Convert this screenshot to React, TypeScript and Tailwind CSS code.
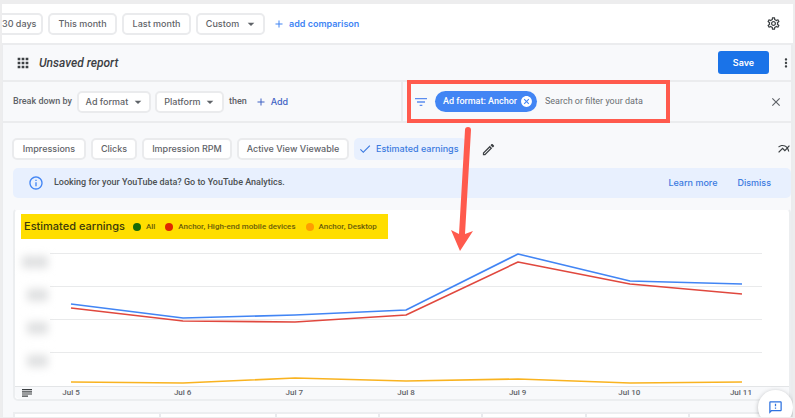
import {
  MdAdd,
  MdApps,
  MdArrowDropDown,
  MdCancel,
  MdCheck,
  MdClose,
  MdFilterList,
  MdMoreVert,
  MdMultilineChart,
  MdOutlineEdit,
  MdOutlineFeedback,
  MdOutlineInfo,
  MdOutlineSettings,
} from "react-icons/md";

const chip =
  "h-[22px] flex items-center justify-center whitespace-nowrap rounded-[5px] border-2 border-[#eaebed] bg-white font-[Inter,sans-serif] text-[9px] text-[#5f6368] font-medium";

const days = ["Jul 5", "Jul 6", "Jul 7", "Jul 8", "Jul 9", "Jul 10", "Jul 11"];

const lines = [
  { color: "#f9b320", points: "21,129 133,130 245,125 356,128 468,126 580,130 692,129" },
  { color: "#e0483e", points: "21,55 133,68 245,69 356,62 468,9 580,31 692,41" },
  { color: "#4285f4", points: "21,51 133,65 245,62 356,57 468,1 580,28 692,31" },
];

const legend = [
  { label: "All", dot: "bg-[#176b06]" },
  { label: "Anchor, High-end mobile devices", dot: "bg-[#df2800]" },
  { label: "Anchor, Desktop", dot: "bg-[#ff9d00]" },
];

function DateBar() {
  return (
    <div className="flex h-[39px] items-center bg-white pr-3">
      <button className="flex h-[22px] w-[41px] items-center whitespace-nowrap rounded-r-[5px] border-y-2 border-r-2 border-[#eaebed] bg-white font-[Inter,sans-serif] text-[9px] font-medium text-[#5f6368]">
        30 days
      </button>
      <button className={`${chip} ml-[5px] w-[69px]`}>This month</button>
      <button className={`${chip} ml-[5px] w-[69px]`}>Last month</button>
      <button className={`${chip} ml-[5px] w-[69px] gap-1`}>
        Custom <MdArrowDropDown className="size-4 -mr-1" />
      </button>
      <button className="ml-2 flex items-center gap-1 font-[Inter,sans-serif] text-[9px] font-semibold text-[#4285f4]">
        <MdAdd className="size-3" /> add comparison
      </button>
      <button aria-label="Settings" className="ml-auto text-[#3c4043]">
        <MdOutlineSettings className="size-[15px]" />
      </button>
    </div>
  );
}

function TitleBar() {
  return (
    <div className="flex h-[37px] items-center border-t-2 border-[#ebecee] pl-3">
      <MdApps className="size-4 text-[#3c4043]" />
      <h1 className="ml-2 text-xs italic font-medium text-[#3c4043]">Unsaved report</h1>
      <button className="ml-auto h-[23px] w-[51px] rounded-[3px] bg-[#1a73e8] font-[Inter,sans-serif] text-[9px] font-semibold text-white">
        Save
      </button>
      <button aria-label="More" className="ml-[10px] w-3 text-[#3c4043]">
        <MdMoreVert className="size-[14px]" />
      </button>
    </div>
  );
}

function FilterBar() {
  return (
    <div className="flex h-[43px] border-y-2 border-[#ebecee]">
      {/* Breakdown */}
      <div className="flex flex-1 items-center border-r-2 border-[#ebecee] pl-[10px] text-[9px] text-[#5f6368]">
        <span className="whitespace-nowrap font-medium">Break down by</span>
        <button className={`${chip} ml-[5px] w-[74px] gap-[2px]`}>
          Ad format <MdArrowDropDown className="size-4 -mr-1" />
        </button>
        <button className={`${chip} ml-1 w-[69px] gap-[2px]`}>
          Platform <MdArrowDropDown className="size-4 -mr-1" />
        </button>
        <span className="ml-[5px] font-medium">then</span>
        <button className="ml-2 flex items-center gap-1 font-[Inter,sans-serif] font-medium text-[#3f62c4]">
          <MdAdd className="size-3" /> Add
        </button>
      </div>

      {/* Filter */}
      <div className="flex w-[388px] items-center pr-2">
        <div className="relative ml-1 flex h-full w-[263px] items-center pl-[6px]">
          <MdFilterList className="size-4 text-[#5b8def]" />
          <span className="ml-[6px] flex h-[21px] items-center gap-[3px] whitespace-nowrap rounded-full bg-[#4285f4] pl-2 pr-1 text-[9px] font-medium text-white">
            Ad format: Anchor
            <button aria-label="Remove filter">
              <MdCancel className="size-[13px]" />
            </button>
          </span>
          <input
            aria-label="Search or filter your data"
            placeholder="Search or filter your data"
            className="ml-2 w-0 flex-1 bg-transparent text-[9px] outline-none placeholder:text-[#6b6f73]"
          />
          <div className="pointer-events-none absolute -inset-y-[2px] inset-x-0 border-4 border-[#ff5a4d]" />
          <svg
            className="pointer-events-none absolute left-[41px] top-[43px] z-10"
            width="30"
            height="128"
            viewBox="0 0 30 128"
          >
            <path
              d="M17 5Q17 2 20 2Q23 2 23 5L17 109L25 106L12 126L3 105L11 109Z"
              fill="#ff5a4d"
            />
          </svg>
        </div>
        <button aria-label="Close" className="ml-auto text-[#5f6368]">
          <MdClose className="size-[14px]" />
        </button>
      </div>
    </div>
  );
}

function Metrics() {
  return (
    <div className="flex items-center gap-[5px] pl-[9px] pt-[15px]">
      <button className={`${chip} w-[74px]`}>Impressions</button>
      <button className={`${chip} w-[46px]`}>Clicks</button>
      <button className={`${chip} w-[90px]`}>Impression RPM</button>
      <button className={`${chip} w-[112px]`}>Active View Viewable</button>
      <button className="flex h-[22px] w-[112px] items-center gap-1 whitespace-nowrap rounded-[5px] bg-[#e8f0fe] pl-1 font-[Inter,sans-serif] text-[9px] font-medium text-[#3b7ae0]">
        <MdCheck className="size-[14px]" /> Estimated earnings
      </button>
      <button aria-label="Edit metrics" className="ml-[10px] text-[#3c4043]">
        <MdOutlineEdit className="size-[15px]" />
      </button>
      <button aria-label="Chart type" className="ml-auto text-[#3c4043]">
        <MdMultilineChart className="size-[14px]" />
      </button>
    </div>
  );
}

function Banner() {
  return (
    <div className="ml-[10px] mt-2 flex h-[30px] items-center rounded-[5px] bg-[#e8f0fe] pl-[15px] pr-5 text-[9px]">
      <MdOutlineInfo className="size-4 text-[#4285f4]" />
      <p className="ml-[10px] font-medium text-[#4c5053]">Looking for your YouTube data? Go to YouTube Analytics.</p>
      <a href="#" className="ml-auto font-[Inter,sans-serif] font-medium text-[#3b7ae0]">Learn more</a>
      <button className="ml-5 font-[Inter,sans-serif] font-medium text-[#3b7ae0]">Dismiss</button>
    </div>
  );
}

function Chart() {
  return (
    <div className="ml-[10px] mt-[10px] rounded-[5px] border-2 border-[#eceef0] border-t-[#f8f9fb] bg-white">
      {/* Legend */}
      <div className="ml-[6px] mt-1 flex h-[25px] w-[367px] items-center bg-[#ffde00] pl-[3px]">
        <h2 className="whitespace-nowrap font-[Inter,sans-serif] text-[11px] font-medium text-[#3c3a0b]">Estimated earnings</h2>
        <ul className="flex gap-[10px] pl-2 text-[8px] font-medium text-[#6b5d0a]">
          {legend.map((item) => (
            <li key={item.label} className="flex items-center gap-[5px] whitespace-nowrap">
              <span className={`size-2 rounded-full ${item.dot}`} />
              {item.label}
            </li>
          ))}
        </ul>
      </div>

      <div className="mt-[14px] flex pr-[27px]">
        <div className="flex w-[35px] flex-col items-end gap-[21px] pr-[2px] pt-[3px]">
          <span className="h-3 w-[26px] bg-[#dfe0e1] blur-[4px]" />
          <span className="h-3 w-[21px] bg-[#dfe0e1] blur-[4px]" />
          <span className="h-3 w-[21px] bg-[#dfe0e1] blur-[4px]" />
          <span className="h-3 w-[21px] bg-[#dfe0e1] blur-[4px]" />
        </div>
        <svg className="h-[133px] w-0 flex-1" viewBox="0 0 712 133" preserveAspectRatio="none" fill="none">
          {[1, 34, 67, 100].map((y) => (
            <path key={y} d={`M0 ${y - 0.5}H712`} stroke="#e9eaeb" strokeWidth="1.2" />
          ))}
          {lines.map((line) => (
            <polyline key={line.color} points={line.points} stroke={line.color} strokeWidth="1.6" strokeLinejoin="round" />
          ))}
        </svg>
      </div>

      <div className="flex h-[13px] items-center rounded-b-[5px] border-t border-[#e3e5e7] bg-[#f8f9fb] pl-[7px] pr-7">
        <svg className="h-2 w-[10px]" viewBox="0 0 10 8" fill="#3c4043" role="img" aria-label="Annotations">
          <path d="M0 0H10V1.2H0ZM0 2.2H10V3.4H0ZM0 4.4H10V5.6H0ZM0 6.6H6V7.8H0Z" />
        </svg>
        <div className="ml-[19px] flex flex-1 justify-between text-[8px] font-medium leading-3 text-[#5f6368]">
          {days.map((day) => (
            <span key={day} className="w-10 text-center">{day}</span>
          ))}
        </div>
      </div>
    </div>
  );
}

export default function App() {
  return (
    <div className="bg-[#ededee] px-[2px] pt-1 pb-[2px] font-[Roboto,'Liberation_Sans',sans-serif]">
      <div className="relative overflow-hidden bg-[#f8f9fb]">
        <DateBar />
        <main className="border-l border-r-2 border-[#ebecee]">
          <TitleBar />
          <FilterBar />
          <Metrics />
          <Banner />
          <Chart />

          {/* Top edge of the report table */}
          <div className="ml-[10px] mt-[11px] flex h-[5px] divide-x-2 divide-[#e8eaed] border-l-2 border-t-2 border-[#eceef0] bg-white">
            <span className="w-[146px]" />
            <span className="w-[116px]" />
            <span className="flex-1" />
            <span className="flex-1" />
            <span className="flex-1" />
            <span className="flex-1" />
            <span className="flex-1" />
          </div>
        </main>

        <button
          aria-label="Send feedback"
          className="absolute -bottom-2 right-0 flex size-[35px] items-center justify-center rounded-full bg-white text-[#2f73e0] shadow-[0_1px_4px_rgba(60,64,67,0.35)]"
        >
          <MdOutlineFeedback className="size-[15px]" />
        </button>
      </div>
    </div>
  );
}
